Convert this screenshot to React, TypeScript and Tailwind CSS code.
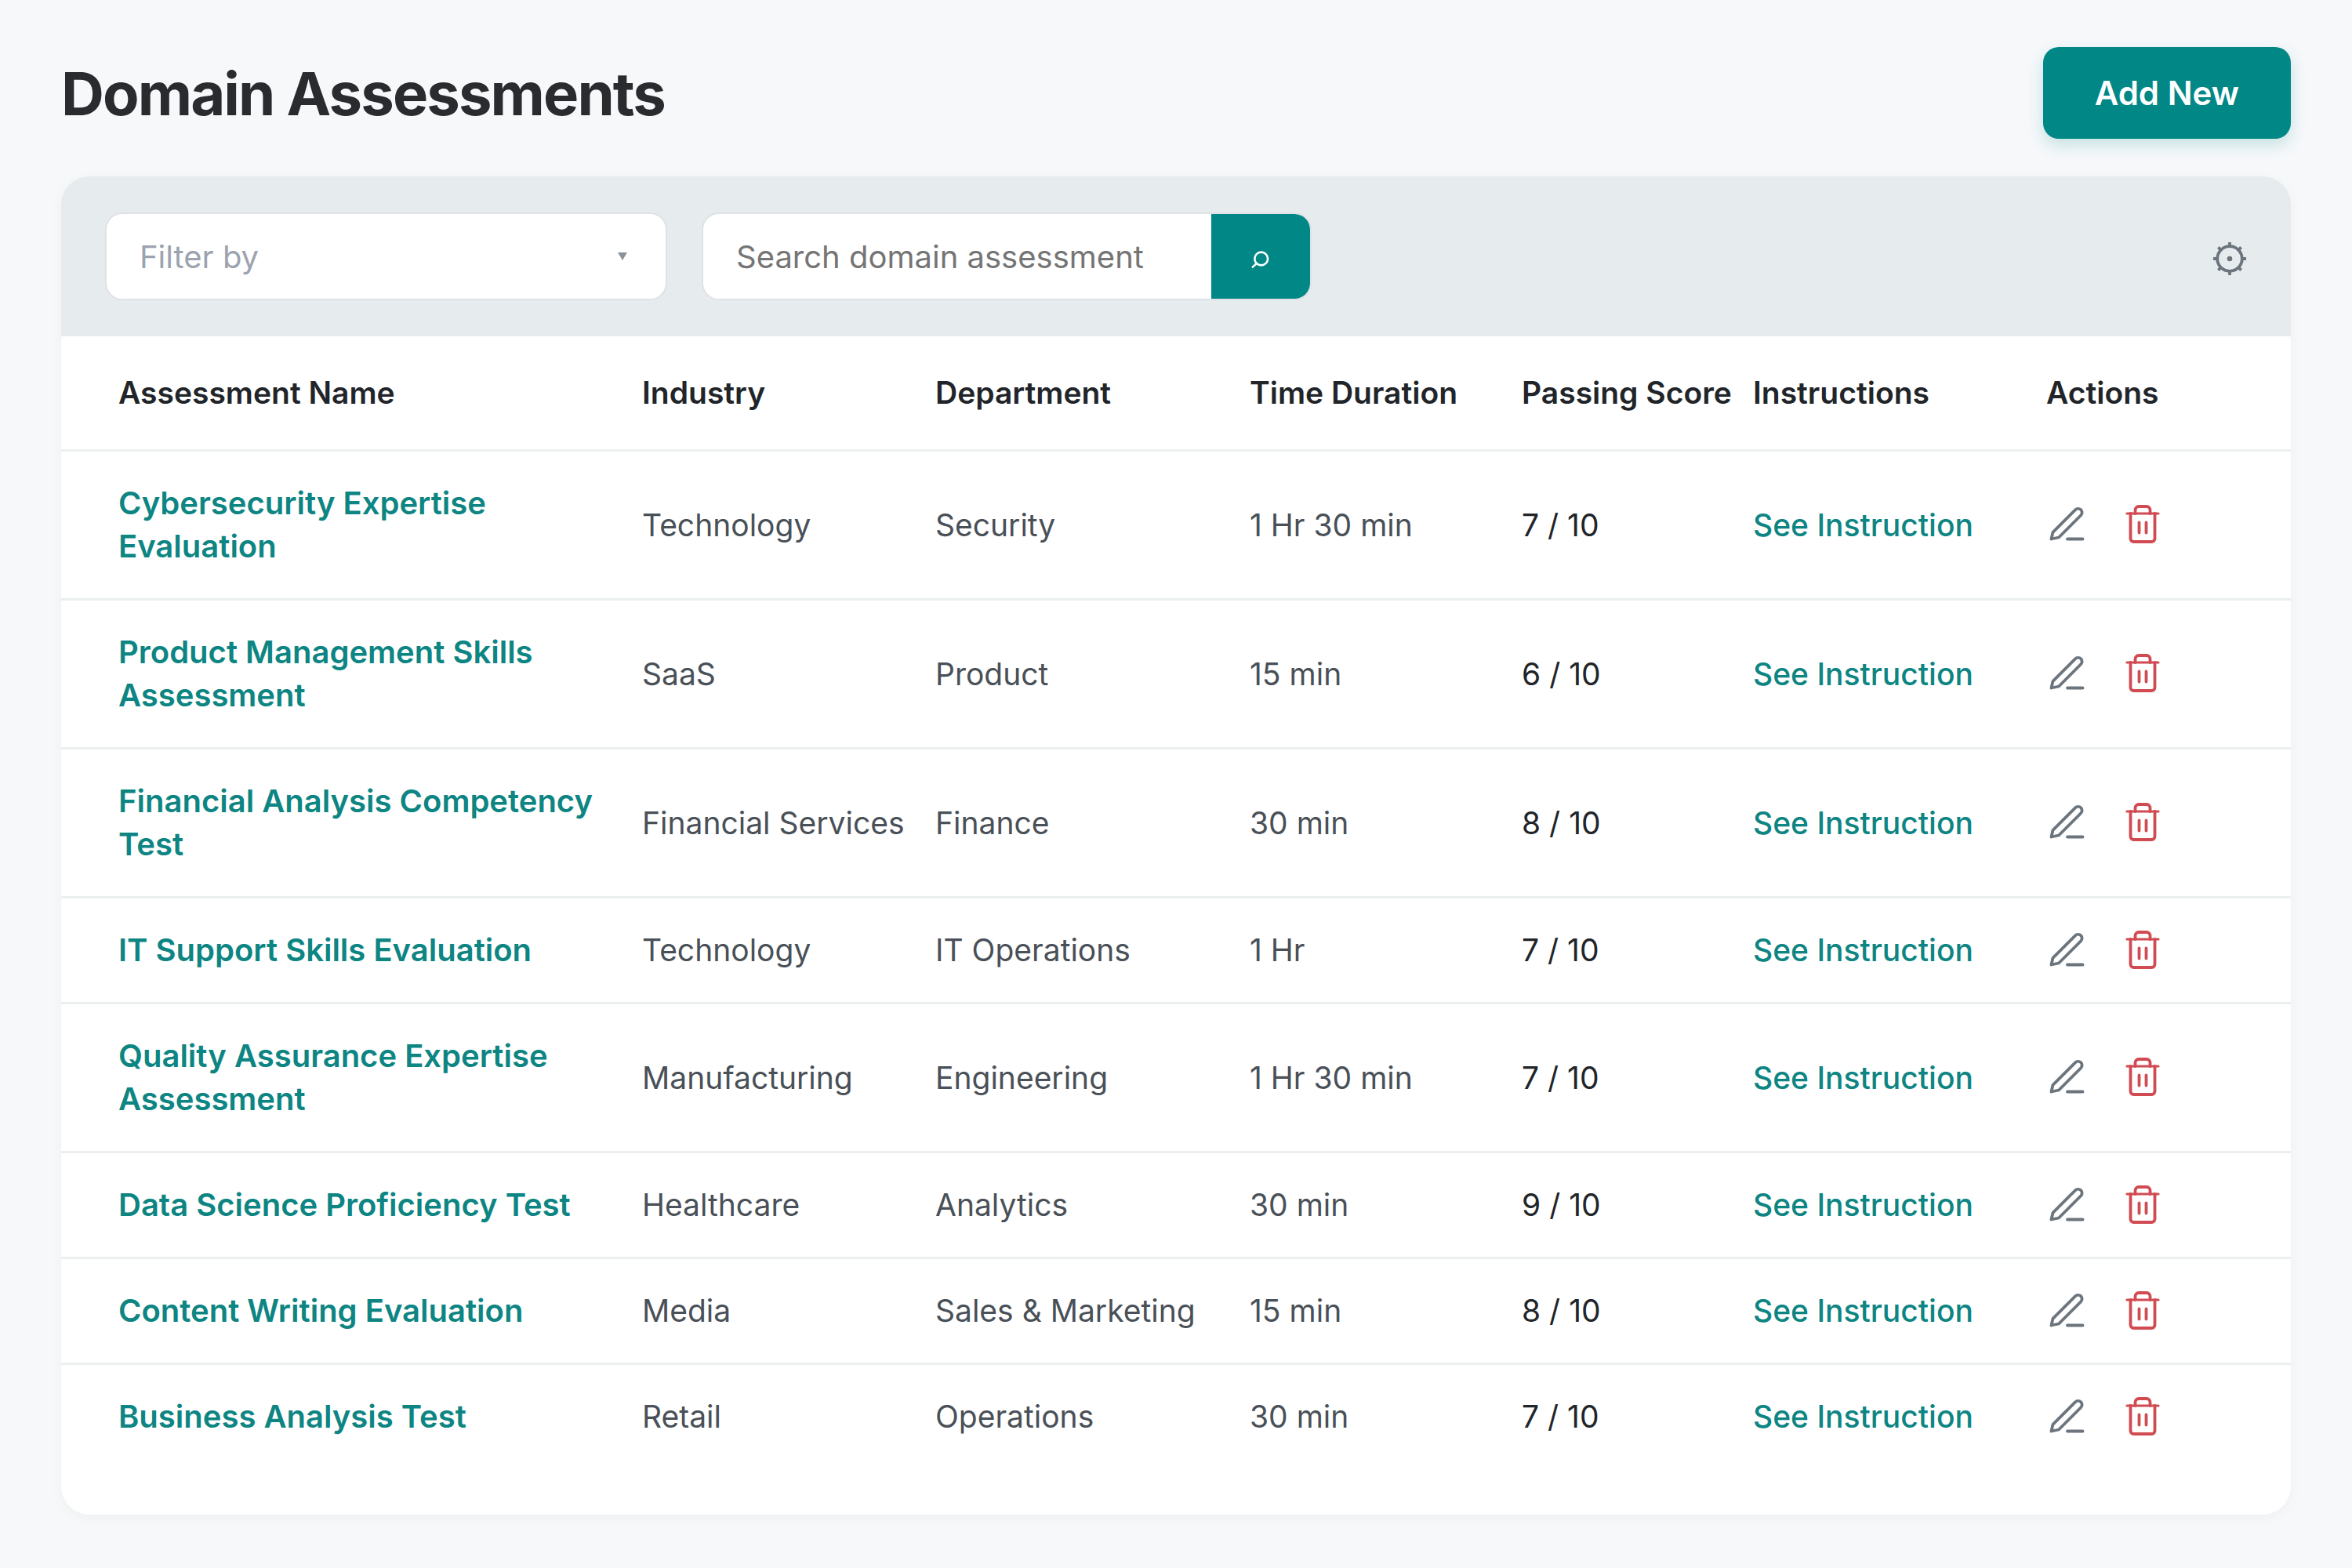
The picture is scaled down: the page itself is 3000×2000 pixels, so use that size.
type Assessment = {
  name: string;
  industry: string;
  department: string;
  duration: string;
  score: number;
};

const assessments: Assessment[] = [
  { name: "Cybersecurity Expertise Evaluation", industry: "Technology", department: "Security", duration: "1 Hr 30 min", score: 7 },
  { name: "Product Management Skills Assessment", industry: "SaaS", department: "Product", duration: "15 min", score: 6 },
  { name: "Financial Analysis Competency Test", industry: "Financial Services", department: "Finance", duration: "30 min", score: 8 },
  { name: "IT Support Skills Evaluation", industry: "Technology", department: "IT Operations", duration: "1 Hr", score: 7 },
  { name: "Quality Assurance Expertise Assessment", industry: "Manufacturing", department: "Engineering", duration: "1 Hr 30 min", score: 7 },
  { name: "Data Science Proficiency Test", industry: "Healthcare", department: "Analytics", duration: "30 min", score: 9 },
  { name: "Content Writing Evaluation", industry: "Media", department: "Sales & Marketing", duration: "15 min", score: 8 },
  { name: "Business Analysis Test", industry: "Retail", department: "Operations", duration: "30 min", score: 7 },
];

function SearchIcon() {
  return (
    <svg viewBox="0 0 32 32" className="size-8" fill="none" stroke="currentColor" strokeWidth="2.6" strokeLinecap="round" aria-hidden>
      <circle cx="16.7" cy="19" r="8.4" />
      <path d="M10.8 25 5.8 29.6" />
    </svg>
  );
}

function GearIcon() {
  return (
    <svg viewBox="0 0 44 50" className="h-[50px] w-11" fill="none" stroke="currentColor" strokeWidth="3.8" aria-hidden>
      <circle cx="22" cy="28" r="15.8" />
      <circle cx="22" cy="28" r="3.3" fill="currentColor" stroke="none" />
      <path d="M22 7v5M22 44v5M1 28h5M38 28h5M7.4 13.4l3.4 3.4M33.2 39.2l3.4 3.4M36.6 13.4l-3.4 3.4M10.8 39.2l-3.4 3.4" />
    </svg>
  );
}

function PencilIcon() {
  return (
    <svg viewBox="0 0 48 48" className="size-12" fill="none" stroke="currentColor" strokeWidth="3.8" strokeLinecap="round" strokeLinejoin="round" aria-hidden>
      <path d="M3.5 42.5 5.5 33.8 34 5.3a5 5 0 0 1 7.2 7L13 40.5Z" />
      <path d="M24 42.5h19.5" />
    </svg>
  );
}

function TrashIcon() {
  return (
    <svg viewBox="0 0 48 52" className="h-13 w-12" fill="none" stroke="currentColor" strokeWidth="3.8" strokeLinecap="round" strokeLinejoin="round" aria-hidden>
      <path d="M4 12h40" strokeWidth="3.2" />
      <path d="M14.5 12V7.5A4.500 4.500 0 0 1 19 3h10a4.500 4.500 0 0 1 4.500 4.500V12" />
      <path d="M8.500 12v32a4 4 0 0 0 4 4h23a4 4 0 0 0 4-4V12" />
      <path d="M19.500 23.500v13M28.500 23.500v13" />
    </svg>
  );
}

export default function App() {
  return (
    <main className="min-h-screen bg-[#f6f8fa] px-[78px] pt-[60px] pb-[67px] font-['Inter',sans-serif] text-[40px] leading-[55px] text-[#212529]">
      <header className="mb-12 flex items-center justify-between">
        <h1 className="text-[76px] leading-[92px] font-bold tracking-tight text-[#2a2b2f]">Domain Assessments</h1>
        <button
          type="button"
          className="h-[117px] rounded-[20px] bg-[#028787] px-[66px] text-[42px] font-semibold text-white shadow-[0_8px_20px_rgba(2,135,135,0.2)]"
        >
          Add New
        </button>
      </header>

      <section className="overflow-hidden rounded-[36px] bg-white pb-[59px] shadow-[0_4px_16px_rgba(0,0,0,0.04)]">
        <div className="flex h-[204px] items-center gap-11 bg-[#e6ebed] px-14">
          <div className="relative w-[717px]">
            <select
              aria-label="Filter by"
              defaultValue=""
              className="h-28 w-full appearance-none rounded-[22px] border-2 border-[#dee2e6] bg-white px-[42px] text-[#9ca3af]"
            >
              <option value="">Filter by</option>
              <option value="industry">Industry</option>
              <option value="department">Department</option>
            </select>
            <svg viewBox="0 0 12 10" className="pointer-events-none absolute top-[51px] right-[51px] h-[10px] w-3" fill="#8b9198" aria-hidden>
              <path d="M0 0h12L6 10Z" />
            </svg>
          </div>

          <form className="flex h-28 w-[778px] overflow-hidden rounded-[22px] border-2 border-[#dee2e6] bg-white">
            <input
              type="search"
              aria-label="Search domain assessment"
              placeholder="Search domain assessment"
              className="min-w-0 flex-1 px-[42px] placeholder:text-[#757575]"
            />
            <button type="button" aria-label="Search" className="flex w-[126px] items-center justify-center bg-[#028787] text-white">
              <SearchIcon />
            </button>
          </form>

          <button type="button" aria-label="Table settings" className="ml-auto text-[#6c757d]">
            <GearIcon />
          </button>
        </div>

        <table className="w-full table-fixed border-collapse text-left text-[39px]">
          <colgroup>
            <col className="w-[741px]" />
            <col className="w-[374px]" />
            <col className="w-[401px]" />
            <col className="w-[347px]" />
            <col className="w-[295px]" />
            <col className="w-[374px]" />
            <col />
          </colgroup>
          <thead>
            <tr className="h-[145px] border-b-3 border-[#eceff0] whitespace-nowrap">
              <th className="pl-[73px] font-semibold">Assessment Name</th>
              <th className="font-semibold">Industry</th>
              <th className="font-semibold">Department</th>
              <th className="font-semibold">Time Duration</th>
              <th className="font-semibold">Passing Score</th>
              <th className="font-semibold">Instructions</th>
              <th className="font-semibold">Actions</th>
            </tr>
          </thead>
          <tbody>
            {assessments.map((item) => (
              <tr key={item.name} className="border-b-3 border-[#eceff0] last:border-b-0">
                <td className="pt-[38px] pr-12 pb-[39px] pl-[73px] text-[40px] font-semibold">
                  <a href="#" className="block text-[#0d8583]">{item.name}</a>
                </td>
                <td className="text-[#495057]">{item.industry}</td>
                <td className="text-[#495057]">{item.department}</td>
                <td className="text-[#495057]">{item.duration}</td>
                <td>{item.score} / 10</td>
                <td className="font-medium">
                  <a href="#" className="text-[#0d8583]">See Instruction</a>
                </td>
                <td className="pl-[3px]">
                  <div className="flex items-center gap-12">
                    <button type="button" aria-label={`Edit ${item.name}`} className="text-[#6c757d]">
                      <PencilIcon />
                    </button>
                    <button type="button" aria-label={`Delete ${item.name}`} className="text-[#d14b52]">
                      <TrashIcon />
                    </button>
                  </div>
                </td>
              </tr>
            ))}
          </tbody>
        </table>
      </section>
    </main>
  );
}
